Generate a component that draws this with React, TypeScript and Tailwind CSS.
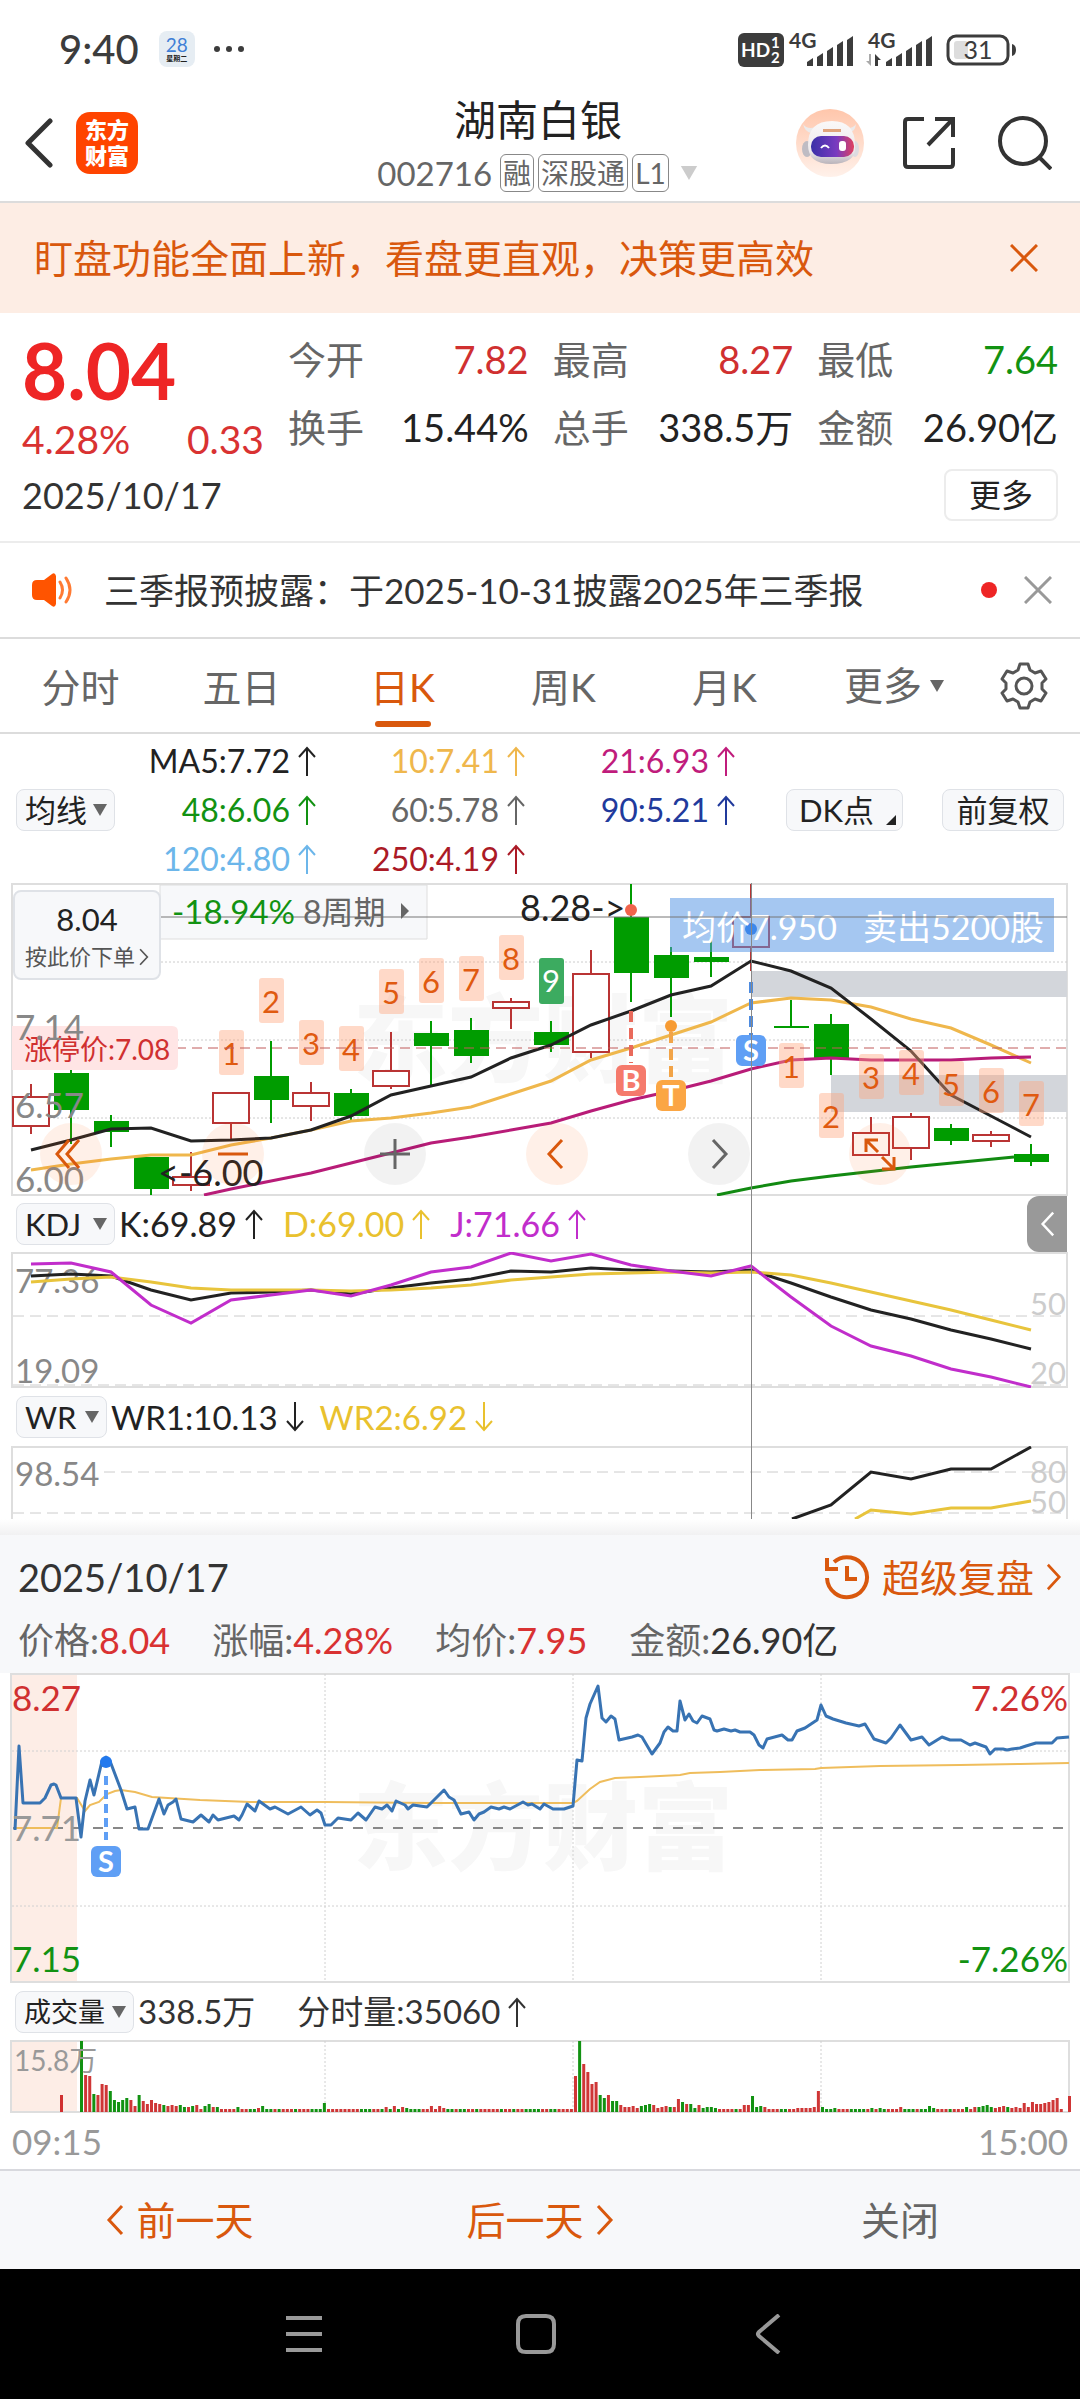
// App.tsx
import React, { useState } from "react";
import clsx from "clsx";

type Candle = [high: number, top: number, bottom: number, low: number, up: boolean];

// x position of the n-th daily candle
const dayX = (i: number) => 31 + i * 40;

const CANDLES: Candle[] = [
  [201, 214, 243, 251, true],
  [186, 190, 227, 261, false],
  [232, 238, 249, 264, false],
  [274, 274, 306, 312, false],
  [269, 294, 302, 308, true],
  [210, 210, 240, 256, true],
  [158, 193, 217, 240, false],
  [199, 210, 223, 238, true],
  [206, 210, 233, 239, false],
  [149, 188, 203, 206, true],
  [138, 150, 163, 202, false],
  [135, 147, 173, 180, false],
  [115, 119, 125, 146, true],
  [138, 149, 162, 169, false],
  [67, 91, 169, 175, true],
  [1, 34, 90, 119, false],
  [64, 72, 95, 134, false],
  [52, 74, 79, 94, false],
  [1, 34, 64, 88, true],
  [117, 143, 145, 145, false],
  [131, 141, 175, 192, false],
  [234, 250, 272, 272, true],
  [230, 234, 265, 277, true],
  [241, 245, 258, 262, false],
  [248, 252, 258, 264, true],
  [261, 271, 279, 283, false],
];

const MA5 = [267, 257, 246, 245, 258, 257, 255, 247, 233, 212, 203, 194, 175, 162, 142, 128, 112, 103, 78, 88, 105, 136, 168, 212, 233, 254];
const MA10 = [287, 281, 276, 272, 272, 262, 255, 247, 238, 235, 230, 224, 211, 198, 177, 165, 152, 139, 120, 115, 117, 124, 136, 145, 162, 180];
const MA21 = [306, 298, 290, 280, 270, 260, 254, 247, 240, 228, 217, 208, 198, 186, 177, 175, 177, 177, 177, 175, 174];

const K = [24, 22, 24, 38, 48, 41, 40, 38, 42, 36, 31, 27, 19, 20, 16, 18, 19, 20, 18, 31, 45, 58, 67, 78, 87, 97];
const D = [30, 27, 25, 30, 36, 38, 38, 38, 39, 38, 36, 33, 28, 25, 22, 21, 20, 21, 20, 23, 31, 40, 49, 58, 68, 78];
const J = [12, 11, 20, 53, 71, 48, 43, 38, 44, 33, 20, 15, 1, 9, 2, 13, 19, 24, 14, 45, 74, 94, 104, 117, 125, 135];

const line = (values: number[], from = 0) =>
  values.map((y, i) => `${dayX(i + from)},${y}`).join(" ");

// [day, top, label]
const COUNTS: [number, number, number][] = [
  [5, 147, 1], [6, 95, 2], [7, 137, 3], [8, 143, 4], [9, 86, 5], [10, 75, 6], [11, 73, 7], [12, 52, 8],
  [19, 160, 1], [20, 210, 2], [21, 171, 3], [22, 167, 4], [23, 178, 5], [24, 185, 6], [25, 198, 7],
];

const PRICE =
  "15,157 19,73 23,130 40,130 45,125 51,112 54,111 56,112 61,125 76,125 81,164 85,128 90,107 94,122 102,88 106,84 110,88 121,117 127,136 135,134 139,156 148,156 159,126 164,141 168,132 173,129 176,126 181,146 193,149 201,142 209,149 213,142 218,147 234,143 239,147 242,142 247,131 255,138 259,128 270,136 275,134 288,141 301,134 310,142 317,137 321,140 325,152 331,152 338,145 351,147 358,140 366,147 375,134 382,136 387,132 392,138 396,128 405,132 408,136 413,132 427,134 431,130 444,117 449,124 454,127 461,141 469,139 474,147 479,141 484,139 491,134 499,136 504,134 510,136 523,129 528,132 532,131 540,136 544,131 553,136 564,136 573,133 577,87 582,88 586,45 590,31 598,13 602,45 606,49 611,43 615,46 619,67 632,64 638,62 642,64 652,81 660,70 664,59 668,54 673,58 677,58 680,28 685,47 689,41 693,48 697,50 702,43 710,46 714,57 717,58 724,56 731,58 735,57 740,59 750,59 754,62 759,72 763,75 767,66 782,62 788,67 792,67 797,58 805,55 817,47 821,32 826,43 833,46 846,50 859,53 865,51 874,66 886,70 891,65 900,52 911,67 922,64 929,72 942,64 950,67 961,67 970,72 975,70 986,74 990,81 995,76 1003,76 1007,77 1012,76 1020,75 1026,73 1036,70 1052,70 1057,65 1069,64";

const AVERAGE =
  "15,155 57,155 61,125 77,125 85,138 90,132 99,129 107,121 115,118 121,117 135,119 152,124 200,127 250,129 325,129 430,130 573,130 577,128 590,116 600,109 615,105 640,104 680,102 690,100 720,99 760,97 815,96 821,95 880,93 960,92 1020,91 1069,90";

// one token per minute bar: colour, height, optional repeat
const VOLUME =
  "g71 r37 r36 g18 r17 r28 r27 g21 g12 g10 g12 g14 r12 r6 g17 r11 r8 r12 r9 r8 g7 r6 r7 r6 g7 g5 r5 g6 r7 r3 g6 g8 r5 g5 " +
  "r3x4 g5 r3x2 g3x2 r4 g6 g3x2 r3 g3 r3x3 g3 r3x3 g3x3 g9 r3x8 g3x3 r3x2 g3 r5 g3 r6 g3 r5 g4 g3x3 r3x2 r6 r3 r6 r4 g3 g3 r3 g3x2 r3x2 g3 r3x5 g3 r3x2 g3 r3x2 g3x4 r3x2 g3x2 r3x4 " +
  "r36 g71 r48 r40 r28 r30 g17 g14 r17 g11 g11 r7 r5 r5 r6 r4 g6 g7 g8 r7 r4 r5 r6 g5 r5 r13 g10 r8 g8 g4 r7 g4 g5 g5 g4 " +
  "r3x4 g3 r3 r7 r7 g16 g5 g6 r5 r3x3 g3x2 r3x2 r4x4 r5 r21 g5 g3x2 g4 r3x3 g3x4 r3 g4 r3 g4 g3 r3x3 r5 g3x3 r3 g3x2 g6 g4 r3x3 g3 r3x3 " +
  "g5 r3 r5 g5 g6 g7 g5 r4 r5 r6 g5 r4 r5 r4 r9 r5 r10 r8 r8 r9 r10 r12 r14 r3 r0 r16";

const BARS = VOLUME.split(" ").flatMap((token) => {
  const [height, repeat] = token.slice(1).split("x");
  return Array.from({ length: Number(repeat ?? 1) }, () => ({
    up: token[0] === "r",
    height: Number(height),
  }));
});

const Caret = ({ className = "w-[14px] h-3" }: { className?: string }) => (
  <svg viewBox="0 0 14 12" className={className} aria-hidden="true">
    <path d="M0 0h14L7 12z" fill="currentColor" />
  </svg>
);

const Arrow = ({ down = false }: { down?: boolean }) => (
  <svg
    viewBox="0 0 18 30"
    className={clsx("w-[18px] h-[30px] ml-2 shrink-0", down && "rotate-180")}
    fill="none"
    stroke="currentColor"
    strokeWidth="2"
    aria-hidden="true"
  >
    <path d="M9 30V2M1 11l8-9 8 9" />
  </svg>
);

const Chevron = ({ left = false, className }: { left?: boolean; className?: string }) => (
  <svg viewBox="0 0 18 32" className={className} fill="none" stroke="currentColor" strokeWidth="3" aria-hidden="true">
    <path d={left ? "M16 2L3 16l13 14" : "M2 2l13 14L2 30"} />
  </svg>
);

const Cross = ({ className }: { className?: string }) => (
  <svg viewBox="0 0 28 28" className={className} fill="none" stroke="currentColor" strokeWidth="3" aria-hidden="true">
    <path d="M1 1l26 26M27 1L1 27" />
  </svg>
);

interface PickerProps {
  label: string;
  options: string[];
  className: string;
}

const Picker: React.FC<PickerProps> = ({ label, options, className }) => (
  <div className="relative shrink-0 text-[#222]">
    <select
      aria-label={label}
      className={clsx(
        "block appearance-none h-[42px] pl-2 rounded-lg border border-[#dfe2e7] bg-[#f7f8fa]",
        className
      )}
    >
      {options.map((o) => (
        <option key={o}>{o}</option>
      ))}
    </select>
    <Caret className="w-[14px] h-3 absolute right-2 top-[15px] text-[#666] pointer-events-none" />
  </div>
);

const Badge = ({ x, y, letter, color }: { x: number; y: number; letter: string; color: string }) => (
  <g>
    <rect x={x - 15} y={y} width="30" height="31" rx="6" fill={color} />
    <text x={x} y={y + 26} textAnchor="middle" fontSize="29" fontWeight="700" fill="#fff">
      {letter}
    </text>
  </g>
);

const Watermark = ({ y }: { y: number }) => (
  <text x="543" y={y} textAnchor="middle" fontSize="95" fontWeight="900" fill="#f7f7f7">
    东方财富
  </text>
);

const StatusBar = () => (
  <div className="flex items-center justify-between pl-[59px] pr-[62px] pt-[29px] pb-5 text-[#3c3c3c]">
    <div className="flex items-center">
      <span className="text-[40px] leading-[40px] font-medium">9:40</span>
      <span className="ml-5 w-9 h-9 rounded-lg bg-[#e6edf3] flex flex-col items-center justify-center">
        <span className="text-[19px] leading-[19px] text-[#3f7fd6]">28</span>
        <span className="text-[7px] leading-[9px] font-bold text-[#222]">星期二</span>
      </span>
      <svg viewBox="0 0 32 8" className="w-8 h-2 ml-[18px]" fill="currentColor" aria-hidden="true">
        <circle cx="4" cy="4" r="3" />
        <circle cx="16" cy="4" r="3" />
        <circle cx="28" cy="4" r="3" />
      </svg>
    </div>
    <svg viewBox="0 0 282 40" className="w-[282px] h-10" fill="#3c3c3c" fontWeight="700" aria-label="信号与电量">
      <rect x="2" y="4" width="46" height="34" rx="6" />
      <text x="5" y="28" fontSize="19" fill="#fff">HD</text>
      <text x="35" y="19" fontSize="15" fill="#fff">1</text>
      <text x="35" y="34" fontSize="15" fill="#fff">2</text>
      {[54, 133].map((x) => (
        <g key={x}>
          <text x={x - 1} y="19" fontSize="21">4G</text>
          {[29, 24, 18, 12, 7].map((top, i) => (
            <path key={top} d={`M${x + 17 + i * 10} 37v${top - 33}l6-4v${37 - top}z`} />
          ))}
        </g>
      ))}
      <path d="M135 25v12l-5-5h3v-7z" fill="#aaa" />
      <path d="M139 37V25l6 6h-3v6z" />
      <rect x="212" y="7" width="60" height="28" rx="8" fill="none" stroke="#3c3c3c" strokeWidth="3" />
      <rect x="218" y="12" width="14" height="18" rx="3" fill="#ddd" />
      <path d="M276 15q4 1 4 6t-4 6z" />
      <text x="242" y="30" textAnchor="middle" fontSize="25" fontWeight="400">31</text>
    </svg>
  </div>
);

const Robot = () => (
  <svg viewBox="0 0 68 68" className="size-[68px]" aria-hidden="true">
    <defs>
      <linearGradient id="halo" x1="0" y1="0" x2="0" y2="1">
        <stop offset="0" stopColor="#ffc6ab" />
        <stop offset="1" stopColor="#fff1ea" />
      </linearGradient>
      <linearGradient id="shell" x1="0" y1="0" x2="0" y2="1">
        <stop offset="0" stopColor="#faf8f8" />
        <stop offset="0.7" stopColor="#eeeaec" />
        <stop offset="1" stopColor="#b9b3ba" />
      </linearGradient>
      <linearGradient id="visor" x1="0" y1="0" x2="1" y2="0">
        <stop offset="0" stopColor="#3a30a8" />
        <stop offset="0.6" stopColor="#7a3bc0" />
        <stop offset="1" stopColor="#e0405e" />
      </linearGradient>
    </defs>
    <circle cx="34" cy="34" r="34" fill="url(#halo)" />
    <path d="M7 15q2 8 8 9l5-6q-9 3-13-3zM60 15q-1 8-7 9l-6-6q9 3 13-3z" fill="#eceaea" />
    <ellipse cx="11" cy="40" rx="5" ry="8" fill="#bfbcc3" />
    <ellipse cx="59" cy="40" rx="4" ry="8" fill="#dddbe0" />
    <path d="M12 36Q12 12 36 12q23 0 23 24 2 19-24 19-23 0-23-19z" fill="url(#shell)" />
    <rect x="15" y="27" width="43" height="21" rx="10" fill="url(#visor)" />
    <path d="M27 20h18v3H27z" fill="#e0a37c" />
    <path d="M25 39q4-5 8 0" fill="none" stroke="#fff" strokeWidth="2" />
    <rect x="43" y="32" width="7" height="10" rx="3" fill="#fff" />
  </svg>
);

const Header = () => (
  <header className="grid grid-cols-[1fr_auto_1fr] items-center pl-6 pr-7 pb-1 border-b-2 border-[#dcdcdc]">
    <div className="flex items-center gap-[22px]">
      <button aria-label="返回">
        <svg viewBox="0 0 30 50" className="w-[30px] h-[50px]" fill="none" stroke="#333" strokeWidth="5" strokeLinecap="round" strokeLinejoin="round">
          <path d="M26 3L4 25l22 22" />
        </svg>
      </button>
      <div className="size-[62px] rounded-[14px] bg-[#ff4400] text-white font-black text-[22px] leading-[26px] flex items-center justify-center text-center">
        东方
        <br />
        财富
      </div>
    </div>
    <div className="text-center pt-[2px]">
      <h1 className="text-[42px] leading-[58px] text-[#222]">湖南白银</h1>
      <div className="flex items-center gap-1 text-[#666] leading-[48px]">
        <span className="text-[33px] mr-1">002716</span>
        {["融", "深股通", "L1"].map((tag) => (
          <span key={tag} className="text-[28px] leading-[36px] px-[2px] border border-[#888] rounded-md">
            {tag}
          </span>
        ))}
        <Caret className="w-5 h-[14px] ml-[6px] text-[#ccc]" />
      </div>
    </div>
    <div className="flex items-center justify-end">
      <button aria-label="智能助手">
        <Robot />
      </button>
      <button aria-label="分享" className="ml-[39px]">
        <svg viewBox="0 0 52 52" className="size-[52px]" fill="none" stroke="#333" strokeWidth="4">
          <path d="M21 2H5q-3 0-3 3v42q0 3 3 3h42q3 0 3-3V31M32 2h18v18M49 3L25 28" />
        </svg>
      </button>
      <button aria-label="搜索" className="ml-[43px]">
        <svg viewBox="0 0 54 54" className="size-[54px]" fill="none" stroke="#333" strokeWidth="4">
          <circle cx="25" cy="25" r="23" />
          <path d="M41 41l12 12" />
        </svg>
      </button>
    </div>
  </header>
);

const STATS = [
  { label: "今开", value: "7.82", color: "text-[#d03030]" },
  { label: "最高", value: "8.27", color: "text-[#d03030]" },
  { label: "最低", value: "7.64", color: "text-[#129212]" },
  { label: "换手", value: "15.44%", color: "text-[#222]" },
  { label: "总手", value: "338.5万", color: "text-[#222]" },
  { label: "金额", value: "26.90亿", color: "text-[#222]" },
];

const Quote = () => (
  <section className="px-[22px] pt-3 pb-5 border-b-2 border-[#ececec]">
    <div className="flex">
      <div className="w-[242px] shrink-0 pt-[6px]">
        <div className="text-[78px] leading-[78px] font-bold text-[#ee2525]">8.04</div>
        <div className="flex justify-between text-[39px] leading-[60px] text-[#d93232]">
          <span>4.28%</span>
          <span>0.33</span>
        </div>
      </div>
      <dl className="flex-1 grid grid-cols-3 content-start gap-x-6 pl-6">
        {STATS.map((s) => (
          <div key={s.label} className="flex justify-between text-[38px] leading-[68px] whitespace-nowrap">
            <dt className="text-[#666]">{s.label}</dt>
            <dd className={s.color}>{s.value}</dd>
          </div>
        ))}
      </dl>
    </div>
    <div className="flex items-center justify-between">
      <span className="text-[36px] leading-[52px] text-[#333]">2025/10/17</span>
      <button className="w-[114px] h-[52px] rounded-lg border-2 border-[#ececec] text-[32px] leading-[46px] text-[#222]">
        更多
      </button>
    </div>
  </section>
);

const Notice = () => (
  <section className="flex items-center pl-8 pr-7 border-b-2 border-[#dcdcdc]">
    <svg viewBox="0 0 40 34" className="w-10 h-[34px]" aria-hidden="true">
      <path d="M5 7h7L20 1q3-2 4 2v28q-1 4-4 2l-8-6H5q-5 0-5-5V12q0-5 5-5z" fill="#ff5400" />
      <path d="M28 9q5 8 0 16M34 5q8 12 0 24" fill="none" stroke="#ff7a33" strokeWidth="3" strokeLinecap="round" />
    </svg>
    <a href="#report" className="ml-8 flex-1 text-[35px] leading-[94px] text-[#333] whitespace-nowrap">
      三季报预披露：于2025-10-31披露2025年三季报
    </a>
    <span className="size-4 rounded-full bg-[#ee2525]" />
    <button aria-label="关闭公告" className="ml-[27px] text-[#999]">
      <Cross className="size-7" />
    </button>
  </section>
);

const TABS = ["分时", "五日", "日K", "周K", "月K"];

const Tabs = () => {
  const [active, setActive] = useState("日K");

  return (
    <nav className="grid grid-cols-[161fr_161fr_161fr_161fr_161fr_178fr_97fr] items-center border-b-2 border-[#dcdcdc] text-[39px] text-[#666]">
      {TABS.map((tab) => (
        <button key={tab} onClick={() => setActive(tab)} className="pt-[14px]">
          <span className={clsx("block leading-[68px]", active === tab && "text-[#d9580d]")}>{tab}</span>
          <span className={clsx("block mx-auto mb-[5px] w-14 h-[6px] rounded-full", active === tab && "bg-[#d9580d]")} />
        </button>
      ))}
      <button className="flex items-center justify-center gap-2">
        更多 <Caret />
      </button>
      <button aria-label="设置" className="pr-4">
        <svg viewBox="0 0 48 48" className="size-12 mx-auto" fill="none" stroke="#555" strokeWidth="3" strokeLinejoin="round">
          <path d="M20 2h8l2 6 5 3 6-2 5 8-4 4v6l4 4-5 8-6-2-5 3-2 6h-8l-2-6-5-3-6 2-5-8 4-4v-6l-4-4 5-8 6 2 5-3z" />
          <circle cx="24" cy="24" r="8" />
        </svg>
      </button>
    </nav>
  );
};

const AVERAGES = [
  { text: "MA5:7.72", color: "text-[#222]" },
  { text: "10:7.41", color: "text-[#efb74c]" },
  { text: "21:6.93", color: "text-[#c01c7c]" },
  { text: "48:6.06", color: "text-[#129212]" },
  { text: "60:5.78", color: "text-[#666]" },
  { text: "90:5.21", color: "text-[#213a9c]" },
  { text: "120:4.80", color: "text-[#6cb6ea]" },
  { text: "250:4.19", color: "text-[#ab1a26]" },
];

const AverageBar = () => (
  <div className="flex items-center pl-4 pr-4 pt-[2px]">
    <Picker label="主图指标" options={["均线", "BOLL"]} className="w-[99px] text-[31px] leading-[38px]" />
    <div className="flex-1 grid grid-cols-[201fr_209fr_210fr] text-[32px] leading-[49px]">
      {AVERAGES.map((a) => (
        <div key={a.text} className={clsx("flex items-center justify-end", a.color)}>
          {a.text}
          <Arrow />
        </div>
      ))}
    </div>
    <button className="ml-[51px] w-[117px] h-[42px] pl-3 rounded-lg border border-[#dfe2e7] bg-[#f7f8fa] text-[31px] leading-[38px] text-[#222] flex items-center whitespace-nowrap">
      DK点
      <svg viewBox="0 0 10 10" className="size-[10px] ml-auto mr-[6px] mt-5" aria-hidden="true">
        <path d="M10 0v10H0z" fill="#222" />
      </svg>
    </button>
    <button className="ml-[39px] w-[122px] h-[42px] rounded-lg border border-[#dfe2e7] bg-[#f7f8fa] text-[31px] leading-[38px] text-[#222]">
      前复权
    </button>
  </div>
);

const TOOLS = [
  { name: "最左", place: "left-[6.6%]", warm: true, d: "M29 17L17 31l12 14M39 17L27 31l12 14" },
  { name: "缩小", place: "left-[21.6%]", warm: true, d: "M16 31h30" },
  { name: "放大", place: "left-[36.6%]", warm: false, d: "M16 31h30M31 16v30" },
  { name: "左移", place: "left-[51.6%]", warm: true, d: "M36 17L23 31l13 14" },
  { name: "右移", place: "left-[66.6%]", warm: false, d: "M25 17l13 14-13 14" },
  { name: "全屏", place: "left-[81.5%]", warm: true, d: "M17 29V17h12M17 17l12 12M45 34v12H33M45 46L33 34" },
];

const CandleChart = () => (
  <div className="relative">
    <svg viewBox="0 0 1080 313" className="block w-full" fill="none">
      <Watermark y={192} />
      <rect x="12" y="1" width="1055" height="311" stroke="#dedede" strokeWidth="2" />
      <path d="M13 79h1054M13 157h1054M13 235h1054" stroke="#ccc" strokeDasharray="2 2" />
      <path d="M160 2h267v54H160z" fill="#f7f8fa" stroke="#dedede" />
      <path d="M751 88h316v26H751zM831 192h236v37H831z" fill="#d3d6db" />
      {CANDLES.map(([high, top, bottom, low, up], i) =>
        up ? (
          <g key={i} stroke="#b93434" strokeWidth="2">
            <path d={`M${dayX(i)} ${high}V${top}M${dayX(i)} ${bottom}V${low}`} />
            <rect x={dayX(i) - 18} y={top} width="36" height={bottom - top} fill="#fff" />
          </g>
        ) : (
          <g key={i} fill="#009c00">
            <rect x={dayX(i) - 1} y={high} width="2" height={low - high} />
            <rect x={dayX(i) - 17} y={top} width="35" height={bottom - top} />
          </g>
        )
      )}
      <rect x="670" y="15" width="384" height="54" fill="#5595e5" fillOpacity="0.53" />
      <g strokeWidth="3">
        <polyline points={line(MA10)} stroke="#efb74c" />
        <polyline points={`204,312 ${line(MA21, 5)}`} stroke="#b81c78" />
        <polyline points="717,312 751,305 791,298 831,293 911,284 1014,274" stroke="#128a12" />
        <polyline points={line(MA5)} stroke="#222" />
      </g>
      {COUNTS.map(([day, top, n]) => (
        <g key={day}>
          <rect x={dayX(day) - 12} y={top} width="25" height="45" rx="3" fill="#ffa57c" fillOpacity="0.42" />
          <text x={dayX(day)} y={top + 35} textAnchor="middle" fontSize="31" fill="#e05a10">
            {n}
          </text>
        </g>
      ))}
      <rect x="539" y="75" width="25" height="46" rx="3" fill="#3cab60" />
      <text x="551" y="109" textAnchor="middle" fontSize="31" fill="#fff">9</text>
      <path d="M160 165h907" stroke="#c05a5a" strokeWidth="1" strokeDasharray="10 6" />
      <path d="M631 128v52" stroke="#e96a5b" strokeWidth="4" strokeDasharray="11 6" />
      <path d="M671 149v48" stroke="#f2a448" strokeWidth="4" strokeDasharray="11 6" />
      <path d="M751 99v53" stroke="#4d8be0" strokeWidth="4" strokeDasharray="11 6" />
      <circle cx="631" cy="27" r="6" fill="#f0644c" />
      <circle cx="671" cy="143" r="6" fill="#f79b33" />
      <circle cx="751" cy="46" r="6" fill="#3d87ea" />
      <Badge x={631} y={182} letter="B" color="#f57a6c" />
      <Badge x={671} y={197} letter="T" color="#fba644" />
      <Badge x={751} y={152} letter="S" color="#5f9ff5" />
      <text x="682" y="57" fontSize="34" fill="#fff">均价7.950</text>
      <text x="1044" y="57" textAnchor="end" fontSize="34" fill="#fff">卖出5200股</text>
      <path d="M160 34h907" stroke="#777" strokeWidth="1" />
      <g fontSize="36" fill="#222">
        <text x="520" y="38">8.28-&gt;</text>
        <text x="158" y="303">&lt;-6.00</text>
      </g>
      <path d="M12 143h160q6 0 6 6v32q0 6-6 6H12z" fill="#ffe5e5" />
      <text x="24" y="177" fontSize="28" fill="#d03030">涨停价:7.08</text>
      <g fontSize="35" fill="#888">
        <text x="15" y="157">7.14</text>
        <text x="15" y="235">6.57</text>
        <text x="15" y="309">6.00</text>
      </g>
      <text x="172" y="41" fontSize="33" fill="#129212">-18.94%</text>
      <text x="303" y="41" fontSize="32" fill="#666">8周期</text>
      <path d="M401 20v16l8-8z" fill="#666" />
    </svg>
    <button className="absolute left-[13px] top-[7px] w-[148px] h-[90px] rounded-lg border-2 border-[#dfe2e7] bg-[#f7f8fa] text-center whitespace-nowrap">
      <span className="block text-[31px] leading-[40px] pt-1 text-[#222]">8.04</span>
      <span className="flex items-center justify-center gap-1 text-[22px] leading-[36px] text-[#555]">
        按此价下单
        <Chevron className="w-[10px] h-[18px]" />
      </span>
    </button>
    {TOOLS.map((t) => (
      <button
        key={t.name}
        aria-label={t.name}
        className={clsx(
          "absolute top-[86.5%] -translate-x-1/2 -translate-y-1/2 size-[62px] rounded-full",
          t.place,
          t.warm ? "bg-[#ff6a1f]/10 text-[#d9580d]" : "bg-black/5 text-[#666]"
        )}
      >
        <svg viewBox="0 0 62 62" className="size-[62px]" fill="none" stroke="currentColor" strokeWidth="3">
          <path d={t.d} />
        </svg>
      </button>
    ))}
  </div>
);

const KdjChart = () => (
  <>
    <div className="flex items-center pl-4 pr-[13px] text-[34px] leading-[56px]">
      <Picker label="副图指标一" options={["KDJ", "MACD"]} className="w-[99px] text-[31px] leading-[38px]" />
      <span className="ml-1 flex items-center text-[#222]">K:69.89<Arrow /></span>
      <span className="ml-5 flex items-center text-[#e9c12e]">D:69.00<Arrow /></span>
      <span className="ml-5 flex items-center text-[#c12dcb]">J:71.66<Arrow /></span>
      <button aria-label="展开侧栏" className="ml-auto w-10 h-14 rounded-l-xl bg-[#999] text-white flex items-center justify-center">
        <Chevron left className="w-[15px] h-[26px]" />
      </button>
    </div>
    <svg viewBox="0 0 1080 136" className="block w-full" fill="none">
      <rect x="12" y="1" width="1055" height="134" stroke="#dedede" strokeWidth="2" />
      <path d="M13 64h1054M13 133h1054" stroke="#ccc" strokeWidth="1" strokeDasharray="11 6" />
      <g fontSize="33" fill="#888">
        <text x="15" y="41">77.36</text>
        <text x="15" y="131">19.09</text>
      </g>
      <g fontSize="31" fill="#ccc" textAnchor="end">
        <text x="1066" y="63">50</text>
        <text x="1066" y="132">20</text>
      </g>
      <g strokeWidth="3">
        <polyline points={line(K)} stroke="#222" />
        <polyline points={line(D)} stroke="#e8c43c" />
        <polyline points={line(J)} stroke="#c12dcb" />
      </g>
    </svg>
  </>
);

const WrChart = () => (
  <>
    <div className="flex items-center pl-4 text-[33px] leading-[58px]">
      <Picker label="副图指标二" options={["WR", "RSI"]} className="w-[91px] text-[31px] leading-[38px]" />
      <span className="ml-1 flex items-center text-[#222]">WR1:10.13<Arrow down /></span>
      <span className="ml-4 flex items-center text-[#e9c12e]">WR2:6.92<Arrow down /></span>
    </div>
    <svg viewBox="0 0 1080 73" className="block w-full" fill="none">
      <path d="M12 73V1h1055v72" stroke="#dedede" strokeWidth="2" />
      <path d="M104 26h963M13 67h1054" stroke="#ccc" strokeWidth="1" strokeDasharray="11 6" />
      <text x="15" y="40" fontSize="33" fill="#888">98.54</text>
      <g fontSize="31" fill="#ccc" textAnchor="end">
        <text x="1066" y="37">80</text>
        <text x="1066" y="67">50</text>
      </g>
      <g strokeWidth="3">
        <polyline points="792,73 831,59 871,26 911,33 951,23 991,23 1031,1" stroke="#222" />
        <polyline points="855,73 871,64 911,68 951,62 991,62 1031,55" stroke="#e8c43c" />
      </g>
    </svg>
  </>
);

const REVIEW = [
  { label: "价格", value: "8.04", color: "text-[#d93232]" },
  { label: "涨幅", value: "4.28%", color: "text-[#d93232]" },
  { label: "均价", value: "7.95", color: "text-[#d93232]" },
  { label: "金额", value: "26.90亿", color: "text-[#333]" },
];

const ReviewPanel = () => (
  <section>
    <div className="px-[18px] pt-3 bg-[#f7f8fa]">
      <div className="flex items-center justify-between">
        <h2 className="text-[38px] leading-[60px] text-[#333]">2025/10/17</h2>
        <a href="#review" className="flex items-center text-[38px] leading-[60px] text-[#d9580d]">
          <svg viewBox="0 0 46 46" className="size-[46px] mr-3" fill="none" stroke="currentColor" strokeWidth="4" aria-hidden="true">
            <path d="M3 24a20 20 0 1 0 7-16M3 4v11h11M23 12v13h10" />
          </svg>
          超级复盘
          <Chevron className="w-4 h-7 ml-3" />
        </a>
      </div>
      <div className="flex gap-[42px] text-[36px] leading-[66px] text-[#666]">
        {REVIEW.map((r) => (
          <span key={r.label}>
            {r.label}:<span className={r.color}>{r.value}</span>
          </span>
        ))}
      </div>
    </div>

    <svg viewBox="0 0 1080 310" className="block w-full" fill="none">
      <rect x="12" y="1" width="65" height="308" fill="#fdede6" />
      <Watermark y={190} />
      <rect x="11" y="1" width="1058" height="308" stroke="#dedede" strokeWidth="2" />
      <path d="M12 78h1057M12 233h1057M325 1v308M573 1v308M821 1v308" stroke="#d0d0d0" strokeDasharray="2 2" />
      <path d="M13 155h1056" stroke="#888" strokeWidth="2" strokeDasharray="10 10" />
      <polyline points={AVERAGE} stroke="#efbd5c" strokeWidth="2" />
      <polyline points={PRICE} stroke="#3873b3" strokeWidth="3" strokeLinejoin="round" />
      <circle cx="106" cy="89" r="6" fill="#2279ee" />
      <path d="M106 103v64" stroke="#5f9ff5" strokeWidth="4" strokeDasharray="9 5" />
      <Badge x={106} y={173} letter="S" color="#5f9ff5" />
      <g fontSize="35">
        <text x="12" y="38" fill="#d03030">8.27</text>
        <text x="12" y="168" fill="#999">7.71</text>
        <text x="12" y="299" fill="#129212">7.15</text>
        <text x="1068" y="38" textAnchor="end" fill="#d03030">7.26%</text>
        <text x="1068" y="299" textAnchor="end" fill="#129212">-7.26%</text>
      </g>
    </svg>

    <div className="flex items-center pl-[15px] text-[33px] leading-[57px] text-[#333]">
      <Picker label="分时指标" options={["成交量", "量比"]} className="w-[119px] text-[27px] leading-[38px]" />
      <span className="ml-1">338.5万</span>
      <span className="ml-[42px] flex items-center">分时量:35060<Arrow /></span>
    </div>

    <svg viewBox="0 0 1080 73" className="block w-full" fill="none">
      <rect x="12" y="1" width="65" height="71" fill="#fdede6" />
      <rect x="11" y="1" width="1058" height="71" stroke="#dedede" strokeWidth="2" />
      <path d="M325 1v70M573 1v70M821 1v70" stroke="#d0d0d0" strokeDasharray="2 2" />
      <rect x="60" y="55" width="3" height="17" fill="#d03030" />
      {BARS.map((bar, i) => (
        <rect
          key={i}
          x={80 + (i * 988) / (BARS.length - 1)}
          y={72 - bar.height}
          width="3"
          height={bar.height}
          fill={bar.up ? "#cf3636" : "#129212"}
        />
      ))}
      <text x="14" y="31" fontSize="28" fill="#999">15.8万</text>
    </svg>
    <div className="flex justify-between px-3 text-[35px] leading-[56px] text-[#999]">
      <span>09:15</span>
      <span>15:00</span>
    </div>
  </section>
);

const App: React.FC = () => {
  const [bannerOpen, setBannerOpen] = useState(true);

  return (
    <div className="bg-white overflow-hidden font-['Lato','Noto_Sans_CJK_SC',sans-serif]">
      <StatusBar />
      <Header />

      {bannerOpen && (
        <div className="flex items-center justify-between pl-[34px] pr-[42px] bg-[#fdede4] text-[#d9580d]">
          <p className="text-[39px] leading-[110px]">盯盘功能全面上新，看盘更直观，决策更高效</p>
          <button aria-label="关闭提示" onClick={() => setBannerOpen(false)}>
            <Cross className="size-7" />
          </button>
        </div>
      )}

      <Quote />
      <Notice />
      <Tabs />
      <AverageBar />

      {/* Daily charts share one crosshair */}
      <div className="relative">
        <CandleChart />
        <KdjChart />
        <WrChart />
        <div className="absolute inset-y-0 left-[69.5%] w-px bg-[#888]" />
      </div>
      <div className="h-4 bg-gradient-to-b from-white to-[#f1f1f2]" />

      <ReviewPanel />

      {/* Footer */}
      <div className="grid grid-cols-3 border-t-2 border-[#d8d9de] bg-[#f7f8fa] text-[39px] leading-[98px] text-[#d9580d]">
        <button className="flex items-center justify-center gap-3">
          <Chevron left className="w-[18px] h-8" />
          前一天
        </button>
        <button className="flex items-center justify-center gap-3">
          后一天
          <Chevron className="w-[18px] h-8" />
        </button>
        <button className="text-[#666]">关闭</button>
      </div>

      {/* System navigation */}
      <div className="flex items-center justify-center gap-[192px] h-[130px] pr-2 bg-black">
        {[
          { name: "最近任务", d: "M2 4h36M2 20h36M2 36h36" },
          { name: "主屏幕", d: "M10 2h20q8 0 8 8v20q0 8-8 8H10q-8 0-8-8V10q0-8 8-8z" },
          { name: "系统返回", d: "M31 1L11 18q-2 2 0 4l20 17" },
        ].map((b) => (
          <button key={b.name} aria-label={b.name}>
            <svg viewBox="0 0 40 40" className="size-10" fill="none" stroke="#999" strokeWidth="4">
              <path d={b.d} />
            </svg>
          </button>
        ))}
      </div>
    </div>
  );
};

export default App;
